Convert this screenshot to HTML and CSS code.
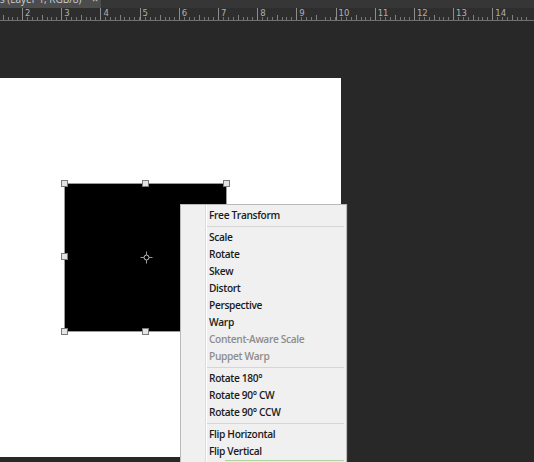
FILE: index.html
```html
<!DOCTYPE html>
<html>
<head>
<meta charset="utf-8">
<link rel="stylesheet" href="styles.css">
</head>
<body>
<div class="tabbar">
  <div class="tab"><span class="tab-title">s (Layer 1, RGB/8) *</span><span class="tab-close">×</span></div>
</div>
<div class="ruler">
  <div class="cell first"><span>1</span></div>
  <div class="cell"><span>2</span></div>
  <div class="cell"><span>3</span></div>
  <div class="cell"><span>4</span></div>
  <div class="cell"><span>5</span></div>
  <div class="cell"><span>6</span></div>
  <div class="cell"><span>7</span></div>
  <div class="cell"><span>8</span></div>
  <div class="cell"><span>9</span></div>
  <div class="cell"><span>10</span></div>
  <div class="cell"><span>11</span></div>
  <div class="cell"><span>12</span></div>
  <div class="cell"><span>13</span></div>
  <div class="cell"><span>14</span></div>
</div>
<div class="workspace">
  <div class="canvas">
    <div class="shape">
      <span class="handle h-tl"></span>
      <span class="handle h-tm"></span>
      <span class="handle h-tr"></span>
      <span class="handle h-ml"></span>
      <span class="handle h-mr"></span>
      <span class="handle h-bl"></span>
      <span class="handle h-bm"></span>
      <span class="handle h-br"></span>
      <svg class="pivot" width="13" height="13" viewBox="0 0 13 13">
        <circle cx="6.5" cy="6.5" r="2.5" fill="none" stroke="#c8c8c8" stroke-width="1"/>
        <path d="M6.5 0.5V4M6.5 9V12.5M0.5 6.5H4M9 6.5H12.5" stroke="#9a9a9a" stroke-width="1"/>
      </svg>
    </div>
  </div>
</div>
<div class="menu">
  <div class="item">Free Transform</div>
  <div class="sep"></div>
  <div class="item">Scale</div>
  <div class="item">Rotate</div>
  <div class="item">Skew</div>
  <div class="item">Distort</div>
  <div class="item">Perspective</div>
  <div class="item">Warp</div>
  <div class="item disabled">Content-Aware Scale</div>
  <div class="item disabled">Puppet Warp</div>
  <div class="sep"></div>
  <div class="item">Rotate 180°</div>
  <div class="item">Rotate 90° CW</div>
  <div class="item">Rotate 90° CCW</div>
  <div class="sep"></div>
  <div class="item">Flip Horizontal</div>
  <div class="item">Flip Vertical</div>
  <div class="item hover"></div>
</div>
</body>
</html>
```
FILE: styles.css
```css
html, body {
  margin: 0;
  padding: 0;
}
body {
  width: 534px;
  height: 462px;
  overflow: hidden;
  position: relative;
  background: #282828;
  font-family: "Open Sans", "Noto Sans", sans-serif;
}
.tabbar {
  height: 8px;
  background: #363636;
  display: flex;
  overflow: hidden;
}
.tab {
  width: 101px;
  background: #4c4c4c;
  overflow: hidden;
  white-space: nowrap;
  color: #cfcfcf;
  font-size: 10px;
  line-height: 14px;
  display: flex;
}
.tab-title {
  margin-top: -8px;
  width: 92px;
  display: block;
}
.tab-close {
  margin-top: -8px;
  display: block;
  font-size: 11px;
}
.ruler {
  height: 12px;
  border-bottom: 1px solid #707070;
  background: #2e2e2e;
  display: flex;
  overflow: hidden;
}
.cell {
  flex: 0 0 39.2px;
  box-sizing: border-box;
  border-left: 1px solid #8c8c8c;
  background:
    linear-gradient(#808080, #808080) no-repeat 19px 100% / 1px 5px,
    repeating-linear-gradient(90deg, transparent 0 3.9px, #767676 3.9px 4.9px) no-repeat 0 100% / 100% 3px;
  color: #b0b0b0;
  font-family: "DejaVu Sans", sans-serif;
  font-size: 8.5px;
  line-height: 10px;
  padding-left: 2px;
}
.cell.first {
  margin-left: -17.2px;
}
.workspace {
  padding-top: 57px;
}
.canvas {
  width: 341px;
  height: 379px;
  background: #ffffff;
  box-sizing: border-box;
  padding: 106px 0 0 65px;
}
.shape {
  position: relative;
  width: 161px;
  height: 147px;
  background: #000;
  box-shadow: 0 0 0 1px #9a9a9a;
}
.handle {
  position: absolute;
  width: 5px;
  height: 5px;
  background: #e4e4e4;
  border: 1px solid #7a7a7a;
  box-sizing: content-box;
}
.h-tl { left: -4px; top: -4px; }
.h-tm { left: 77px; top: -4px; }
.h-tr { right: -4px; top: -4px; }
.h-ml { left: -4px; top: 69px; }
.h-mr { right: -4px; top: 69px; }
.h-bl { left: -4px; bottom: -4px; }
.h-bm { left: 77px; bottom: -4px; }
.h-br { right: -4px; bottom: -4px; }
.pivot {
  position: absolute;
  left: 75px;
  top: 67px;
}
.menu {
  position: absolute;
  left: 180px;
  top: 204px;
  width: 167px;
  box-sizing: border-box;
  border: 1px solid #b9b9b9;
  border-bottom: none;
  padding-top: 2px;
  background:
    linear-gradient(90deg, transparent 0 24px, #dcdcdc 24px 25px, #ffffff 25px 26px, transparent 26px) no-repeat,
    #f0f0f0;
  box-shadow: 1px 0 0 #3a3a3a;
}
.item {
  height: 17px;
  line-height: 17px;
  padding-left: 28px;
  font-size: 10.2px;
  font-weight: 600;
  letter-spacing: -0.35px;
  color: #1b1b1b;
  white-space: nowrap;
}
.item.disabled {
  color: #8d8d8d;
}
.item.hover {
  margin-left: 44px;
  margin-right: 2px;
  border-top: 1px solid #a8d5a0;
  background: #e6f2e3;
}
.sep {
  height: 5px;
  margin-left: 26px;
  margin-right: 2px;
  background: linear-gradient(#d6d6d6, #d6d6d6) no-repeat 0 2px / 100% 1px;
}
```
